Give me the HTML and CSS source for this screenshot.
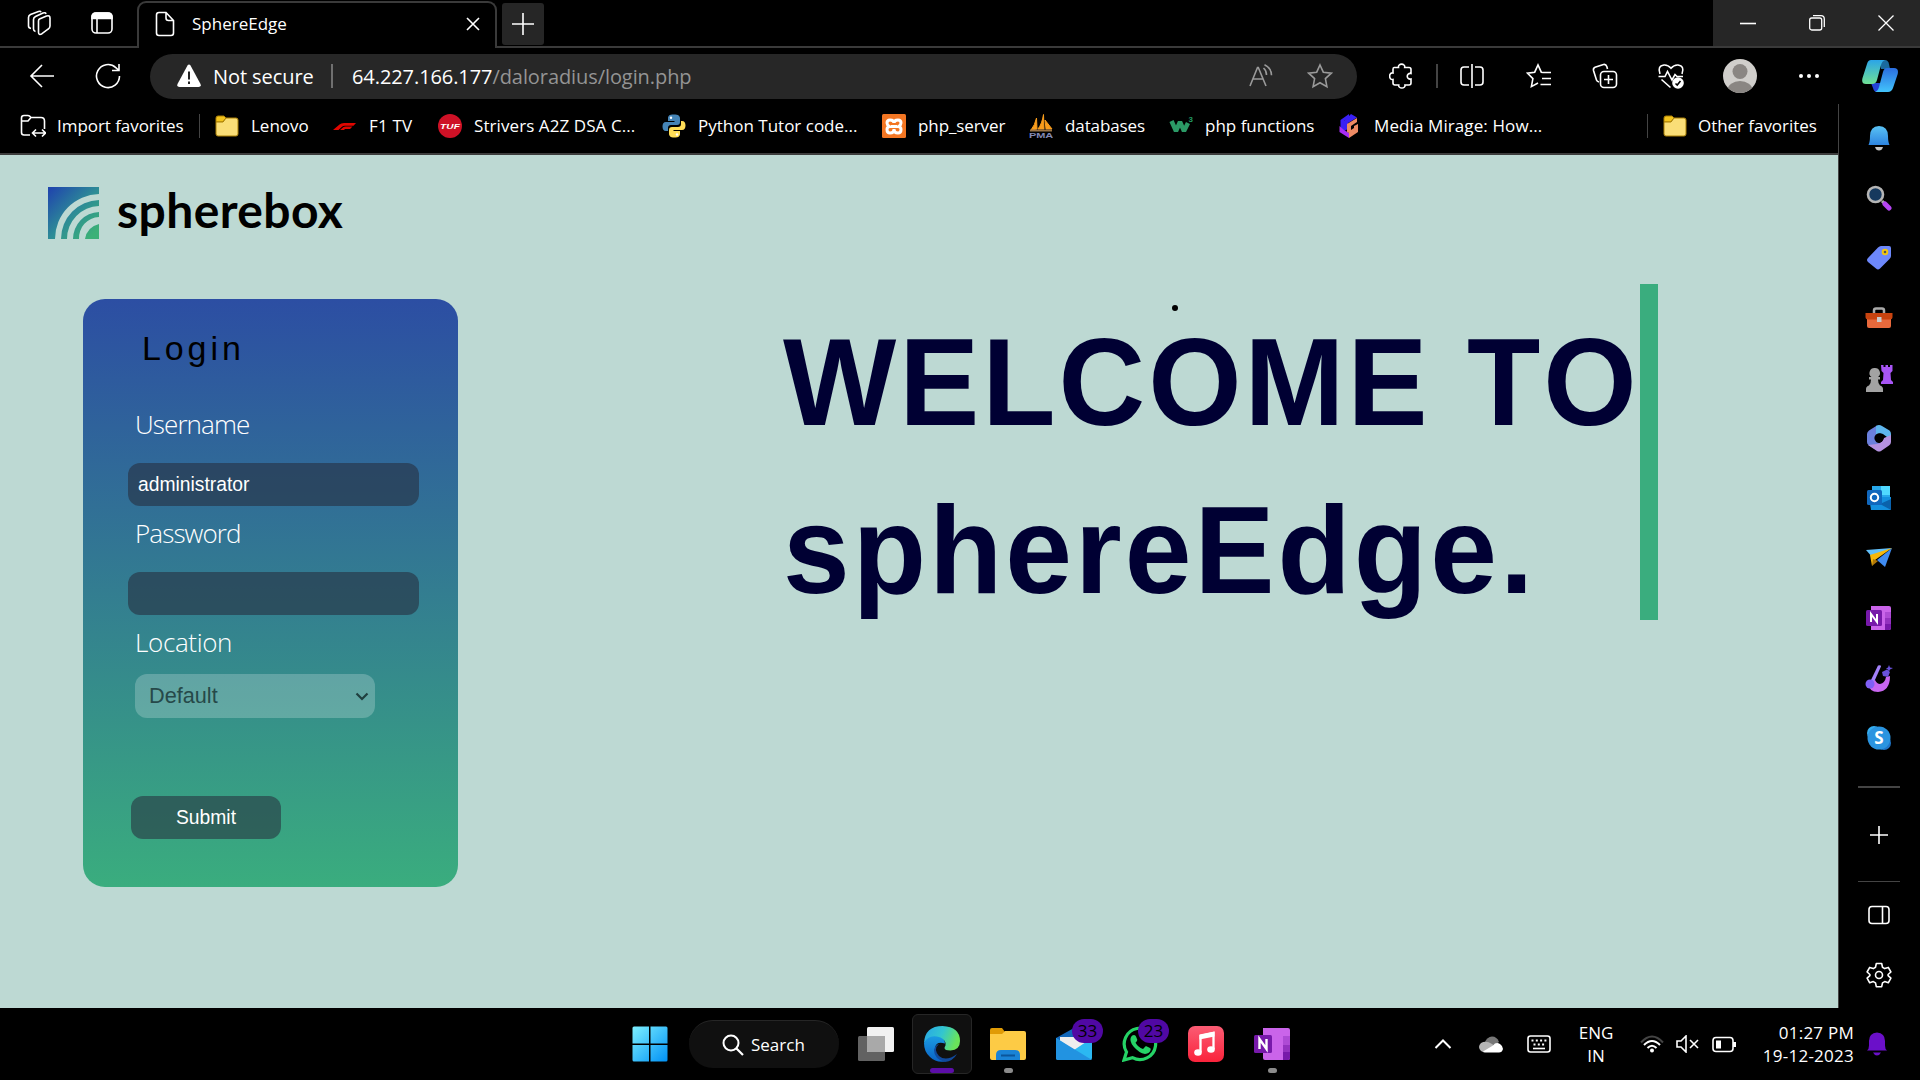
FILE: index.html
```
<!DOCTYPE html>
<html lang="en">
<head>
<meta charset="utf-8">
<title>SphereEdge</title>
<link rel="stylesheet" href="styles.css">
</head>
<body>
<div class="tabstrip">
  <div class="strip-left">
    <svg class="line" width="26" height="26" viewBox="0 0 26 26"><path d="M13.500 9 20.500 6q3.500-1 3.500 2v8q0 2-2 3.200l-6 4.500q-3.500 2-3.500-1.500V11q0-1.500 1-2z"/><path d="M9.500 21.500Q7.500 21 7.500 19V9.500q0-2 2-3L17 3q2.500-.8 3 1"/><path d="M5 18.500Q2.500 18 2.500 16V7.500q0-2 2-3L12.500 1.500q2-.6 2.500.7"/></svg>
    <svg class="line" width="24" height="24" viewBox="0 0 24 24"><rect x="2" y="2" width="20" height="20" rx="4"/><path d="M2 7.500V6q0-4 4-4h12q4 0 4 4v1.500z" fill="#fff"/><path d="M7 8v14"/></svg>
  </div>
  <div class="tab">
    <svg class="line" width="20" height="26" viewBox="0 0 20 26"><path d="M4 1.500h7l7.500 8V22q0 2.500-2.500 2.500H4Q1.500 24.500 1.500 22V4Q1.500 1.500 4 1.500zM11 1.500V7q0 2.500 2.500 2.500h5"/></svg>
    <span class="tab-title">SphereEdge</span>
    <svg class="line" width="14" height="14" viewBox="0 0 14 14"><path d="M1 1l12 12M13 1 1 13"/></svg>
  </div>
  <div class="newtab-wrap"><div class="newtab"><svg class="line" width="22" height="22" viewBox="0 0 22 22"><path d="M11 0v22M0 11h22"/></svg></div></div>
  <div class="strip-fill"></div>
  <div class="window-controls">
    <svg class="line" width="16" height="16" viewBox="0 0 16 16"><path d="M0 8.500h16"/></svg>
    <svg class="line thin-line" width="16" height="16" viewBox="0 0 16 16"><rect x=".7" y="3" width="12" height="12" rx="2"/><path d="M4 .7h8q3.300 0 3.300 3.300v8"/></svg>
    <svg class="line thin-line" width="16" height="16" viewBox="0 0 16 16"><path d="M0.500.5l15 15M15.500.5l-15 15"/></svg>
  </div>
</div>

<div class="toolbar">
  <svg class="line" width="26" height="26" viewBox="0 0 26 26"><path d="M25 13H2M13 2 2 13l11 11"/></svg>
  <svg class="line" width="26" height="26" viewBox="0 0 26 26"><path d="M24.500 13A11.500 11.500 0 1 1 20.800 4.600L23.500 7M24 1v6.500h-7"/></svg>
  <span></span>
  <div class="address">
    <svg width="24" height="24" viewBox="0 0 24 24"><path d="M10.500 1.500q1.500-2 3 0L23.500 20q1 3-2 3h-19q-3 0-2-3z" fill="#fff"/><path d="M12 7.500v8M12 17.500v2.500" stroke="#222" stroke-width="2"/></svg>
    <span class="insecure">Not secure</span>
    <i class="address-sep"></i>
    <span class="url"><b>64.227.166.177</b>/daloradius/login.php</span>
    <svg class="line dim" width="24" height="24" viewBox="0 0 24 24"><path d="M1 22 8.500 3.500h.8L17 22M4 15h10M14.500 4q3 2.500 3 7M15.500.8q7 3.500 7 10.500"/></svg>
    <svg class="line dim" width="26" height="26" viewBox="0 0 26 26"><path d="M13 2l3.300 7.200 8 1-5.900 5.400 1.500 8-6.900-3.900-6.900 3.900 1.500-8L1.700 10.200l8-1z"/></svg>
  </div>
  <span></span>
  <svg class="line ext" width="26" height="26" viewBox="0 0 26 26"><path d="M5 4.500h4.500c-.8-4.500 7-4.500 6.200 0H20q2 0 2 2v4c-5-1-5 6.500 0 5.500V20q0 2-2 2h-4c.8 4-7 4-6.300 0H6q-2 0-2-2v-3.500c-4.500.8-4.500-7.500 0-6.500V6.500q0-2 1-2z"/></svg>
  <i class="bar-sep"></i>
  <svg class="line" width="26" height="26" viewBox="0 0 26 26"><path d="M13 1v24M10 4H5Q2 4 2 7v12q0 3 3 3h5M16 4h5q3 0 3 3v12q0 3-3 3h-5"/></svg>
  <svg class="line" width="26" height="26" viewBox="0 0 26 26"><path d="M17 9.500l-1.700-.3L12 2 8.700 9.200l-7.200 1 5.400 5.400-1.500 8L12 20M16.500 9.500H25M16 15.500h9M14.500 21.500H25"/></svg>
  <svg class="line" width="26" height="26" viewBox="0 0 26 26"><rect x="8.500" y="8.500" width="16" height="16" rx="3.500"/><path d="M16.500 12v9M12 16.500h9M7 19q-2-.5-2.500-2L1.500 7.500Q1 5 3 4.200L11.500 1.500q2.500-.5 3.300 2L15.500 6"/></svg>
  <svg class="line" width="28" height="26" viewBox="0 0 28 26"><path d="M3 11Q0 3 7 2q4-.3 7 3.300Q17 1.700 21 2q7 1 4 9M1.500 13.500H8l2.500-5L15 17l3-5.500 2 2h6M4.500 16.500l9 8"/><circle cx="21" cy="20" r="5.800" fill="#fff" stroke="none"/><path d="M18.500 20.500l1.700 1.500 3.300-4" stroke="#000"/></svg>
  <svg width="34" height="34" viewBox="0 0 34 34"><defs><clipPath id="face"><circle cx="17" cy="17" r="17"/></clipPath></defs><g clip-path="url(#face)"><path d="M0 0h34v34H0z" fill="#d0cecb"/><circle cx="17" cy="12.500" r="7.500" fill="#8a8683"/><ellipse cx="17" cy="31" rx="12.500" ry="9" fill="#8a8683"/></g></svg>
  <svg width="22" height="6" viewBox="0 0 22 6" fill="#fff"><circle cx="3" cy="3" r="2"/><circle cx="11" cy="3" r="2"/><circle cx="19" cy="3" r="2"/></svg>
  <svg width="36" height="34" viewBox="0 0 36 34"><defs><linearGradient id="cpa" x2="0" y2="1"><stop stop-color="#2ba4e8"/><stop offset="1" stop-color="#6fe094"/></linearGradient><linearGradient id="cpb" x2="0" y2="1"><stop stop-color="#2a6de0"/><stop offset="1" stop-color="#43c4fb"/></linearGradient></defs><path d="M9 24h9v9h-3q-3 0-4-4z" fill="#2443d8"/><path d="M18 1h5q3 0 4 4l1 5h-9z" fill="#1a6a9e"/><path d="M9 1h14q-3 1-4 5l-4 15q-1 4-5 4H4q-5 0-3.500-6L5 5q1-4 4-4z" fill="url(#cpa)"/><path d="M25 9h7q5 0 3.700 6L31 29q-1.500 4-5 4H13q3-1 4-5l4-15q1-4 4-4z" fill="url(#cpb)"/></svg>
</div>

<div class="middle">
<div class="content">
  <div class="favorites">
    <div class="fav fav-import"><svg class="line" width="26" height="24" viewBox="0 0 26 24"><path d="M10 21H4Q1.500 21 1.500 18.500V4Q1.500 1.500 4 1.500h4q1.500 0 3 2h10Q24.500 3.500 24.500 7v8M1.500 7H8l3-3.500M13 19h12M16 15.500 12.500 19l3.500 3.500M22 15.500l3.500 3.500-3.500 3.500"/></svg><span>Import favorites</span></div>
    <i class="fav-sep"></i>
    <div class="fav fav-lenovo"><svg width="24" height="24" viewBox="0 0 24 24"><path d="M1 4q0-2 2-2h6l2 2-3 4H1z" fill="#f2c31c" stroke="#a97f05"/><path d="M1 8h7l3-4h10q2 0 2 2v14q0 2-2 2H3q-2 0-2-2z" fill="#fade77" stroke="#a97f05"/></svg><span>Lenovo</span></div>
    <div class="fav fav-f1"><svg width="24" height="24" viewBox="0 0 24 24"><path d="M0 16 6.500 10.500Q8 9 11 9h12l-2.500 2.700H12q-2 0-3 1L5.500 16zM7 16l3.500-3q.8-.5 2-.5h7L17 15h-5l-1 1z" fill="#e10600"/></svg><span>F1 TV</span></div>
    <div class="fav fav-striver"><svg width="24" height="24" viewBox="0 0 24 24"><circle cx="12" cy="12" r="12" fill="#ce1126"/><text x="2" y="15" textLength="20" lengthAdjust="spacingAndGlyphs" class="tuf">TUF</text></svg><span>Strivers A2Z DSA C...</span></div>
    <div class="fav fav-python"><svg width="24" height="24" viewBox="0 0 24 24"><path d="M11.800.5C7 .5 6 2 6 4.500V7h6.500v1H4C1.500 8 .5 10 .5 12.500S1.500 17 4 17h2v-3q0-3 3-3h6q3 0 3-3V4.500C18 2 16.500.5 11.800.5z" fill="#4584b6"/><path d="M12.200 23.500c4.800 0 5.800-1.500 5.800-4V17h-6.500v-1H20c2.500 0 3.500-2 3.500-4.500S22.500 7 20 7h-1v3q0 3-3 3h-6q-3 0-3 3v3.500c0 2.500 1.500 4 5.200 4z" fill="#ffde57"/><circle cx="9" cy="3.700" r="1.200" fill="#fff"/><circle cx="15" cy="20.500" r="1.200" fill="#fff"/></svg><span>Python Tutor code...</span></div>
    <div class="fav fav-server"><svg width="24" height="24" viewBox="0 0 24 24"><rect width="24" height="24" rx="1.500" fill="#f37623"/><path d="M8 6q4 0 4 3 0-3 4-3 3 0 3 3 0 2-2.500 3.500Q19 13 19 15.500 19 19 16 19q-4 0-4-4 0 4-4 4-3 0-3-3.500 0-2.500 2.500-3Q5 11 5 9q0-3 3-3zM9 12.500h6" fill="none" stroke="#fff" stroke-width="3"/></svg><span>php_server</span></div>
    <div class="fav fav-db"><svg width="24" height="24" viewBox="0 0 24 24"><path d="M2 16Q6 11 7.500 4L8 15zM9 15q4-5 5.500-14.500L15 15zM16 6l7 9h-6z" fill="#f89c1c" stroke="#f89c1c"/><path d="M1 15.500h22v2H1z" fill="#9a7446"/><text x="0" y="24" textLength="24" lengthAdjust="spacingAndGlyphs" class="pma">PMA</text></svg><span>databases</span></div>
    <div class="fav fav-functions"><svg width="24" height="24" viewBox="0 0 24 24"><path d="M2.500 7l4.500 10 4-9 4 9 4-8" fill="none" stroke="#2b9a66" stroke-width="4.500" stroke-linejoin="bevel"/><text x="19.500" y="8" class="w3">3</text></svg><span>php functions</span></div>
    <div class="fav fav-media"><svg width="24" height="24" viewBox="0 0 24 24"><path d="M11 0v4L6 7v10l-3.500 1V6z" fill="#3a20f5"/><path d="M13 0l6 3.500-9 5.500v6l-4 2V7z" fill="#3a20f5"/><path d="M1.500 12v6L11 24v-5l-5-3z" fill="#a82cf3"/><path d="M19 4v4l-6 4v4l3-2v-2l4-2v8l-9 6v-5l-2-1v-8z" fill="#ed8a64"/></svg><span>Media Mirage: How...</span></div>
    <i class="fav-sep"></i>
    <div class="fav fav-other"><svg width="24" height="24" viewBox="0 0 24 24"><path d="M1 4q0-2 2-2h6l2 2-3 4H1z" fill="#f2c31c" stroke="#a97f05"/><path d="M1 8h7l3-4h10q2 0 2 2v14q0 2-2 2H3q-2 0-2-2z" fill="#fade77" stroke="#a97f05"/></svg><span>Other favorites</span></div>
  </div>

  <main class="page">
    <div class="left">
      <div class="logo">
        <svg width="51" height="52" viewBox="0 0 51 52"><defs><linearGradient id="lg" x2="1" y2="1"><stop offset=".05" stop-color="#2048ac"/><stop offset=".5" stop-color="#2d8b97"/><stop offset=".9" stop-color="#3cb177"/></linearGradient></defs><path fill="url(#lg)" d="M0 0h51v7A45 45 0 0 0 7 52H0zM51 13v6A33 33 0 0 0 19 52H13A39 39 0 0 1 51 13zM51 25v5A21 21 0 0 0 31 52H25A27 27 0 0 1 51 25zM51 37v15H37Q39 40 51 37z"/></svg>
        <span class="logo-text">spherebox</span>
      </div>
      <form class="card">
        <h2 class="card-title">Login</h2>
        <label class="label">Username</label>
        <div class="field">administrator</div>
        <label class="label">Password</label>
        <div class="field"></div>
        <label class="label label-location">Location</label>
        <div class="select">Default<svg width="14" height="9" viewBox="0 0 14 9"><path d="M1.500 1.500 7 7l5.500-5.500" fill="none" stroke="#1f3f3f" stroke-width="2.200"/></svg></div>
        <div class="submit">Submit</div>
      </form>
    </div>
    <div class="hero">
      <i class="dot"></i>
      <h1 class="welcome"><span class="welcome-line">WELCOME TO</span><span class="welcome-line">sphereEdge.</span></h1>
    </div>
  </main>
</div>

<aside class="sidebar">
  <div class="cell"><svg width="26" height="26" viewBox="0 0 26 26"><defs><linearGradient id="bl" x2="0" y2="1"><stop stop-color="#5ac3f5"/><stop offset="1" stop-color="#2d84e0"/></linearGradient></defs><path d="M2.500 20Q4 17 4 11 4 1.500 13 1q9 .5 9 10 0 6 1.500 9z" fill="url(#bl)"/><path d="M9 22h8q-1 3.500-4 3.500T9 22z" fill="#c5c5c5"/></svg></div>
  <div class="cell"><svg width="26" height="26" viewBox="0 0 26 26"><path d="M16 16l3 3" stroke="#aaa" stroke-width="3"/><path d="M19 19l4 4" stroke="#b545f2" stroke-width="5" stroke-linecap="round"/><circle cx="9.500" cy="9.500" r="7.500" fill="#16395e" stroke="#b5b5b5" stroke-width="2.600"/></svg></div>
  <div class="cell"><svg width="26" height="26" viewBox="0 0 26 26"><path d="M2 13 12 2.500Q13.500 1 15 1h8q2 0 2 2v8q0 1.500-1.500 3L14 23.500q-2 2-4 0L2 17q-2-2 0-4z" fill="#6d88fb"/><circle cx="19" cy="7" r="2.300" fill="#555" stroke="#f3c60f" stroke-width="2"/></svg></div>
  <div class="cell"><svg width="28" height="22" viewBox="0 0 28 22"><path d="M9 6V3.500Q9 1.500 11 1.500h6q2 0 2 2V6" fill="none" stroke="#aaa" stroke-width="2.500"/><path d="M2 10h24v9q0 2-2 2H4q-2 0-2-2z" fill="#e8693c"/><path d="M.5 6h27v4q0 2.500-3 2.500h-21q-3 0-3-2.500z" fill="#c8430f"/><rect x="12" y="10" width="4.500" height="5" fill="#ccc"/></svg></div>
  <div class="cell"><svg width="28" height="28" viewBox="0 0 28 28"><path d="M16 1h2.500v2h2V1H23v2h2V1h2.500v6l-2 2 .5 7 2 2v2H16v-2l2-2 .5-7-2-2z" fill="#a855f5"/><path d="M10 4a5 5 0 0 1 3 9h2v2.500h-2q0 4 2 6 3 1 3 3.500V28H1v-3q0-2.500 3-3.500 2-2 2-6H4V13h2.500A5 5 0 0 1 10 4z" fill="#a3a3a3"/></svg></div>
  <div class="cell"><svg width="26" height="28" viewBox="0 0 26 28"><path d="M1 10Q1 8 3 6.500L11 1.500 10 18l8 3-6 6-9.500-6Q1 20 1 18z" fill="#6b80dd"/><path d="M10 2q3-2 6 0l7.500 4.500Q25 7.500 25 10v6l-8-6q-4-2-7 1z" fill="#5eb6ed"/><path d="M25 11v7q0 2-2 3.500L15 27q-2 1-4 0L2 21l9-1q5-1 7-6z" fill="#b592e0"/><circle cx="13" cy="14" r="4.600" fill="#000"/></svg></div>
  <div class="cell"><svg width="26" height="26" viewBox="0 0 26 26"><path d="M6 1h18v19H6z" fill="#28a8ea"/><path d="M15 1h9v9h-9z" fill="#50d9ff"/><path d="M3 12h22v12q0 1-1 1H5z" fill="#1490df"/><path d="M25 14v11L14 19z" fill="#0a62ac"/><rect x="1" y="5" width="15" height="15" rx="1.500" fill="#1067bd"/><circle cx="8.500" cy="12.500" r="3.700" fill="none" stroke="#fff" stroke-width="2"/></svg></div>
  <div class="cell"><svg width="28" height="22" viewBox="0 0 28 22"><path d="M1 3 27 1 8 11z" fill="#62c0fa"/><path d="M27 1 20 20l-8-7z" fill="#3f8cf2"/><path d="M5 8 27 1 10 13l-3 6z" fill="#f5b80c"/><path d="M7 19l1-7 5 2z" fill="#b17808"/></svg></div>
  <div class="cell"><svg width="28" height="26" viewBox="0 0 28 26"><path d="M6 1h18q2 0 2 2v20q0 2-2 2H6z" fill="#ca64ea"/><path d="M20 7h6v6h-6z" fill="#ae4bd5"/><path d="M20 13h6v6h-6z" fill="#9332bf"/><path d="M20 19h6v4q0 2-2 2h-4z" fill="#7719aa"/><rect x="1" y="5" width="16" height="16" rx="1.500" fill="#7719aa"/><path d="M6 17V9l6 8V9" fill="none" stroke="#fff" stroke-width="2"/></svg></div>
  <div class="cell"><svg width="28" height="28" viewBox="0 0 28 28"><path d="M3 19Q4 28 13 28q12-1 12-16l-4 1q-1 6-6 7-3 0-5-4z" fill="#c966f0"/><path d="M6 16 13 1.500q3-1 3 1L9 18z" fill="#a482fa"/><circle cx="5" cy="20" r="4.500" fill="#8060f5"/><path d="M17 8l5-2.500L25 8l-2 5-5-1zM24 1l1 2.500 3 .5-3 1.500-1 2-1-2-2-1 2-1z" fill="#6851dc"/></svg></div>
  <div class="cell"><svg width="26" height="26" viewBox="0 0 26 26"><circle cx="8" cy="8" r="7" fill="#35aef0"/><circle cx="18" cy="18" r="7" fill="#1f75c8"/><circle cx="13" cy="13" r="11.500" fill="#2a94e0"/><text x="13" y="19" text-anchor="middle" class="skype">S</text></svg></div>
  <i class="side-sep"></i>
  <div class="cell"><svg class="line" width="18" height="18" viewBox="0 0 18 18"><path d="M9 0v18M0 9h18"/></svg></div>
  <i class="side-sep thin"></i>
  <div class="cell"><svg class="line" width="22" height="20" viewBox="0 0 22 20"><rect x="1" y="1.500" width="20" height="17" rx="3"/><path d="M14.500 1.500v17"/></svg></div>
  <div class="cell"><svg class="line" width="26" height="26" viewBox="0 0 26 26"><path d="M10.300 1.500h5.400l.8 3.800 2.200 1.300 3.600-1.200 2.600 4.600-2.800 2.500v1.200l2.800 2.500-2.600 4.600-3.600-1.200-2.200 1.300-.8 3.800h-5.400l-.8-3.800-2.200-1.300-3.600 1.200-2.600-4.600 2.800-2.500v-1.200L1.100 10l2.600-4.600 3.600 1.200 2.200-1.300z" stroke-linejoin="round"/><circle cx="13" cy="13" r="3.500"/></svg></div>
</aside>
</div>

<footer class="taskbar">
  <div class="task"><svg width="36" height="36" viewBox="0 0 36 36"><defs><linearGradient id="win" x2="1" y2="1"><stop stop-color="#7df0ff"/><stop offset="1" stop-color="#0091f5"/></linearGradient></defs><path d="M2 .5h15v17H.5V2Q.5.5 2 .5zM18.500.5H34q1.500 0 1.500 1.500v15.500h-17zM.5 19H17v16.500H2Q.5 35.500.5 34zM18.500 19h17v15q0 1.500-1.500 1.500H18.500z" fill="url(#win)"/></svg></div>
  <div class="search"><svg class="line" width="22" height="22" viewBox="0 0 22 22"><circle cx="9" cy="9" r="7.500" stroke-width="2"/><path d="M14.500 14.500 21 21" stroke-width="2.200"/></svg>Search</div>
  <div class="task"><svg width="36" height="34" viewBox="0 0 36 34"><rect y="9" width="27" height="25" rx="1.500" fill="#626262"/><rect x="9" width="27" height="25" rx="1.500" fill="#f1f1f1"/><path d="M9 9h18v16H10.500Q9 25 9 23.500z" fill="#a9a9a9"/></svg></div>
  <div class="task"><div class="task-active"><svg width="36" height="36" viewBox="0 0 36 36"><defs><linearGradient id="e1" x2="1" y2=".3"><stop stop-color="#27a5e8"/><stop offset=".55" stop-color="#33c6cf"/><stop offset="1" stop-color="#6ae45a"/></linearGradient><linearGradient id="e2" x2="0" y2="1"><stop stop-color="#1b9be2"/><stop offset="1" stop-color="#0a62c4"/></linearGradient></defs><path d="M0 17Q1 0 18.500 0 36 1 36 15q0 9-9.500 9.500-6 0-6-2.500 0-1 1-2.500 1-6-6-7Q6 10 0 17z" fill="url(#e1)"/><path d="M0 17q4-8 13-6.500 8 1.500 8 7Q12 15 11 22q0 9 10 13.500Q12 37 6 31 0 26 0 17z" fill="url(#e2)"/><path d="M15 18q-6 5 0 12 7 6 18-2-4 7-12 8-11-3-11-12 1-5 5-6z" fill="#114a9c"/></svg><i class="active-mark"></i></div></div>
  <div class="task"><svg width="36" height="32" viewBox="0 0 36 32"><path d="M0 2q0-2 2-2h10l3 4v5H0z" fill="#e09b06"/><path d="M0 6h12l3-3h19q2 0 2 2v25q0 2-2 2H2q-2 0-2-2z" fill="#fdcb45"/><path d="M6 32v-5q0-5 5-5h14q5 0 5 5v5z" fill="#1a83d6"/><path d="M11 27.500h14" stroke="#0b559b" stroke-width="2"/></svg><i class="running"></i></div>
  <div class="task"><svg width="36" height="32" viewBox="0 0 36 32"><path d="M0 10 18 0l18 10v20H0z" fill="#1266b8"/><path d="M4 9h28v10L18 24 4 17z" fill="#eee"/><path d="M0 10l18 12L36 10v20q0 2-2 2H2q-2 0-2-2z" fill="#2bb8f2"/><path d="M0 10l36 22H2q-2 0-2-2z" fill="#2293e1"/></svg><span class="badge">33</span></div>
  <div class="task"><svg width="36" height="36" viewBox="0 0 36 36"><path d="M2 34 4.500 26A15.700 15.700 0 1 1 10.500 31.700z" fill="none" stroke="#25d366" stroke-width="3.200"/><path d="M12 9q1.500 0 2 1.500l1.300 3.200q.3.800-1.800 3 2.500 4.500 7.500 6.300 1-.8 2.200-2.500.6-.5 1.300-.2l3.500 1.700q1 .6.700 1.800-1 4-5.700 4.200Q17 27 11.500 20.500 7 15 9 11q1-2 3-2z" fill="#25d366"/></svg><span class="badge">23</span></div>
  <div class="task"><svg width="36" height="36" viewBox="0 0 36 36"><defs><linearGradient id="mu" x2="0" y2="1"><stop stop-color="#fb5c74"/><stop offset="1" stop-color="#fa233b"/></linearGradient></defs><rect width="36" height="36" rx="7" fill="url(#mu)"/><path d="M12.500 26V10l13-3v16" fill="none" stroke="#fff" stroke-width="2.300"/><path d="M11.500 8.500 26.500 5.500v5l-15 3z" fill="#fff"/><ellipse cx="10" cy="26.500" rx="3.800" ry="3.300" fill="#fff"/><ellipse cx="23" cy="23.500" rx="3.800" ry="3.300" fill="#fff"/></svg></div>
  <div class="task"><svg width="36" height="32" viewBox="0 0 36 32"><path d="M9 0h25q2 0 2 2v28q0 2-2 2H11q-2 0-2-2z" fill="#ca64ea"/><path d="M29 8h7v9h-7z" fill="#ae4bd5"/><path d="M29 17h7v8h-7z" fill="#9332bf"/><path d="M29 24h7v6q0 2-2 2h-5z" fill="#7719aa"/><rect y="7" width="18" height="18" rx="1.500" fill="#7719aa"/><path d="M5.500 21V11l7 10V11" fill="none" stroke="#fff" stroke-width="2.400"/></svg><i class="running"></i></div>

  <div class="tray">
    <svg class="line" width="18" height="12" viewBox="0 0 18 12"><path d="M1.500 10 9 2.500l7.500 7.500" stroke-width="2"/></svg>
    <svg width="24" height="17" viewBox="0 0 24 17"><path d="M6 6q2-5 7-5.500 5 0 7 5.500l-7 5z" fill="#777"/><path d="M2 15q-4-4 0-8 5-3 11 1l4 3-13 5z" fill="#b5b5b5"/><path d="M4 15.500 14 9.500q3-4 7-1.500 3 2 3 5-1 3.500-4 3.500H6q-2 0-2-1z" fill="#fff"/></svg>
    <svg class="line" width="24" height="18" viewBox="0 0 24 18"><rect x="1" y="1" width="22" height="16" rx="2.500"/><path d="M4.500 5.500h15M6.500 9.500h11" stroke-width="2" stroke-dasharray="2 2.300"/><path d="M6 13.500h12"/></svg>
    <div class="lang">ENG<br>IN</div>
    <svg class="line" width="24" height="18" viewBox="0 0 24 18"><path d="M1 7.500q11-12 22 0" stroke="#444" stroke-width="2"/><path d="M4 10q8-8 16 0M7.500 13q4.500-4.500 9 0" stroke-width="2"/><circle cx="12" cy="15.500" r="2" fill="#fff" stroke="none"/></svg>
    <svg class="line" width="24" height="18" viewBox="0 0 24 18"><path d="M1 6h4l5-5v16l-5-5H1zM14 5l8 8M22 5l-8 8"/></svg>
    <svg class="line" width="24" height="17" viewBox="0 0 24 17"><rect x="1" y="1.500" width="20" height="14" rx="3"/><path d="M4 4.500h5v8H4zM21 6h3v5h-3z" fill="#fff" stroke="none"/></svg>
    <div class="clock">01:27 PM<br>19-12-2023</div>
    <svg width="20" height="24" viewBox="0 0 20 24"><path d="M0 18.500q2-1.500 2-5V9q0-8 8-8.500 8 .5 8 8.500v4.500q0 3.500 2 5zM6 20.500h8q-1.500 3-4 3t-4-3z" fill="#6b10c9"/></svg>
  </div>
</footer>
</body>
</html>
```
FILE: styles.css
```
* { box-sizing: border-box; }
html, body { margin: 0; width: 1920px; height: 1080px; overflow: hidden; }
body { background: #000; color: #fff; font-family: "Open Sans", "Noto Sans", sans-serif; font-size: 17px; display: flex; flex-direction: column; }
svg { display: block; flex: none; }
.line { fill: none; stroke: #fff; stroke-width: 1.6; }
.thin-line { stroke-width: 1.3; }
.dim { stroke: #9a9a9a; }

/* tab strip */
.tabstrip { height: 48px; display: flex; }
.strip-left { width: 137px; display: flex; align-items: center; gap: 38px; padding-left: 26px; border-bottom: 2px solid #3a3a3a; }
.tab { width: 360px; margin-top: 1px; border: 2px solid #3a3a3a; border-bottom: 0; border-radius: 9px 9px 0 0; display: flex; align-items: center; padding: 0 15px 4px 16px; }
.tab-title { flex: 1; margin-left: 17px; }
.newtab-wrap { width: 48px; padding: 3px 0 0 5px; border-bottom: 2px solid #3a3a3a; }
.newtab { width: 42px; height: 42px; border-radius: 3px; background: #262626; display: grid; place-items: center; }
.strip-fill { flex: 1; border-bottom: 2px solid #3a3a3a; }
.window-controls { width: 207px; display: grid; grid-template-columns: repeat(3, 69px); place-items: center; background: #262626; border-bottom: 2px solid #3a3a3a; }

/* toolbar */
.toolbar { height: 56px; display: grid; align-items: center; justify-items: center; grid-template-columns: 84px 48px 18px 1207px 10px 66px 8px 62px 72px 60px 72px 66px 72px 70px; }
.address { width: 1207px; height: 45px; border-radius: 23px; background: #272727; display: flex; align-items: center; padding: 0 24px 0 27px; font-size: 20px; letter-spacing: -0.08px; }
.insecure { margin-left: 12px; width: 101px; white-space: nowrap; }
.address-sep { width: 2px; height: 24px; background: #707070; margin: 0 19px 0 17px; }
.url { flex: 1; color: #949494; }
.url b { color: #fff; font-weight: 400; }
.address .dim + .dim { margin-left: 34px; }
.ext { margin-left: 3px; }
.bar-sep { width: 2px; height: 24px; background: #444; }

/* body row */
.middle { height: 904px; display: flex; }
.content { width: 1838px; }
.favorites { height: 51px; display: flex; padding: 0 0 5px 20px; border-bottom: 2px solid #3d3d3d; align-items: center; font-size: 17px; }
.fav { display: flex; align-items: center; gap: 12px; white-space: nowrap; height: 44px; }
.fav span { padding-bottom: 2px; }
.fav-sep { width: 1px; height: 24px; background: #444; margin-right: 15px; }
.fav-import { width: 179px; gap: 11px; letter-spacing: -0.05px; }
.fav-lenovo { width: 118px; }
.fav-f1 { width: 105px; letter-spacing: 0.2px; }
.fav-striver { width: 224px; letter-spacing: 0.08px; }
.fav-python { width: 220px; }
.fav-server { width: 147px; letter-spacing: -0.1px; }
.fav-db { width: 140px; letter-spacing: -0.1px; }
.fav-functions { width: 169px; }
.fav-media { width: 309px; letter-spacing: 0.1px; }
.fav-other { width: 160px; gap: 11px; letter-spacing: -0.05px; }
.tuf { font: italic 700 8px "Liberation Sans", sans-serif; fill: #fff; }
.pma { font: 700 8px "Liberation Sans", sans-serif; fill: #8389b5; }
.w3 { font: 700 8px "Liberation Sans", sans-serif; fill: #229a64; }

/* login page */
.page { height: 853px; background: #bdd9d3; display: flex; }
.left { width: 783px; padding-top: 32px; }
.logo { display: flex; height: 52px; margin-left: 48px; gap: 18px; align-items: center; }
.logo-text { font: 700 48px/52px Lato, sans-serif; letter-spacing: 0.4px; padding-bottom: 7px; color: #000; }
.card { width: 375px; height: 588px; margin: 60px 0 0 83px; border-radius: 22px; padding: 29px 0 0 45px; background: linear-gradient(#2c4ea3, #3aad7e); font-family: "Liberation Sans", sans-serif; display: flex; flex-direction: column; align-items: flex-start; }
.card-title { margin: 0 0 0 14px; font-weight: 400; font-size: 34px; line-height: 40px; letter-spacing: 3.9px; color: #000; }
.label { height: 66px; margin-left: 7px; font: 300 26px/36px "Open Sans", sans-serif; letter-spacing: -0.9px; }
.card-title + .label { height: 57px; margin-top: 38px; }
.field + .label { padding-top: 9px; }
.label.label-location { height: 59px; letter-spacing: -0.35px; }
.field { width: 291px; height: 43px; border-radius: 12px; background: rgba(39, 47, 63, .6); padding-left: 10px; font-size: 19.3px; line-height: 43px; }
.select { width: 240px; height: 44px; margin-left: 7px; border-radius: 12px; background: rgba(255, 255, 255, .22); color: #264949; font-size: 21.7px; display: flex; align-items: center; justify-content: space-between; padding: 0 6px 0 14px; }
.submit { width: 150px; height: 43px; margin: 78px 0 0 3px; border-radius: 12px; background: rgba(39, 42, 59, .55); text-align: center; font-size: 19.3px; line-height: 43px; }
.hero { padding-top: 129px; position: relative; }
.dot { position: absolute; left: 389px; top: 150px; width: 6px; height: 6px; border-radius: 50%; background: #000; }
.welcome { margin: 0; width: 875px; height: 336px; padding-top: 15px; border-right: 18px solid #3aad7e; color: #000033; font: 700 120px/168px "Liberation Sans", sans-serif; font-kerning: none; letter-spacing: 3px; white-space: nowrap; }
.welcome-line { display: block; transform: scaleY(1.04); transform-origin: 0 126px; }

/* sidebar */
.sidebar { width: 82px; border-left: 1px solid #444; padding: 4px 1px 0 0; display: flex; flex-direction: column; align-items: center; }
.cell { width: 80px; height: 60px; display: grid; place-items: center; flex: none; }
.side-sep { width: 42px; height: 2px; background: #444; margin: 18px 0 17px; }
.side-sep.thin { height: 1px; margin: 16px 0 3px; }
.skype { font: 700 17px "Open Sans", sans-serif; fill: #fff; }

/* taskbar */
.taskbar { height: 72px; padding-left: 610px; display: flex; align-items: center; }
.task { width: 66px; height: 72px; display: grid; place-items: center; position: relative; }
.task:first-child { width: 79px; }
.search { width: 150px; height: 48px; margin-right: 4px; border-radius: 24px; background: #101010; border-top: 1px solid #262626; display: flex; align-items: center; gap: 7px; padding-left: 33px; font-size: 17px; }
.task-active { width: 60px; height: 60px; border: 1px solid #262626; border-radius: 6px; background: #101010; display: grid; place-items: center; position: relative; }
.active-mark { position: absolute; left: 17px; bottom: 0; width: 24px; height: 5px; border-radius: 3px; background: #5c0ea8; }
.running { position: absolute; left: 29px; bottom: 7px; width: 9px; height: 5px; border-radius: 3px; background: #8b8b8b; }
.badge { position: absolute; left: 31px; top: 11px; width: 31px; height: 24px; border-radius: 12px; background: #5008a3; color: #000; text-align: center; font-size: 17px; line-height: 24px; }
.tray { margin-left: auto; width: 486px; display: grid; grid-template-columns: 45px 48px 50px 63px 36px 36px 34px 108px 46px; align-items: center; line-height: 23px; }
.lang { width: 40px; margin-left: -1px; text-align: center; }
.clock { text-align: right; width: 108px; letter-spacing: 0.25px; padding-bottom: 1px; }
.tray > :last-child { justify-self: center; }
```
